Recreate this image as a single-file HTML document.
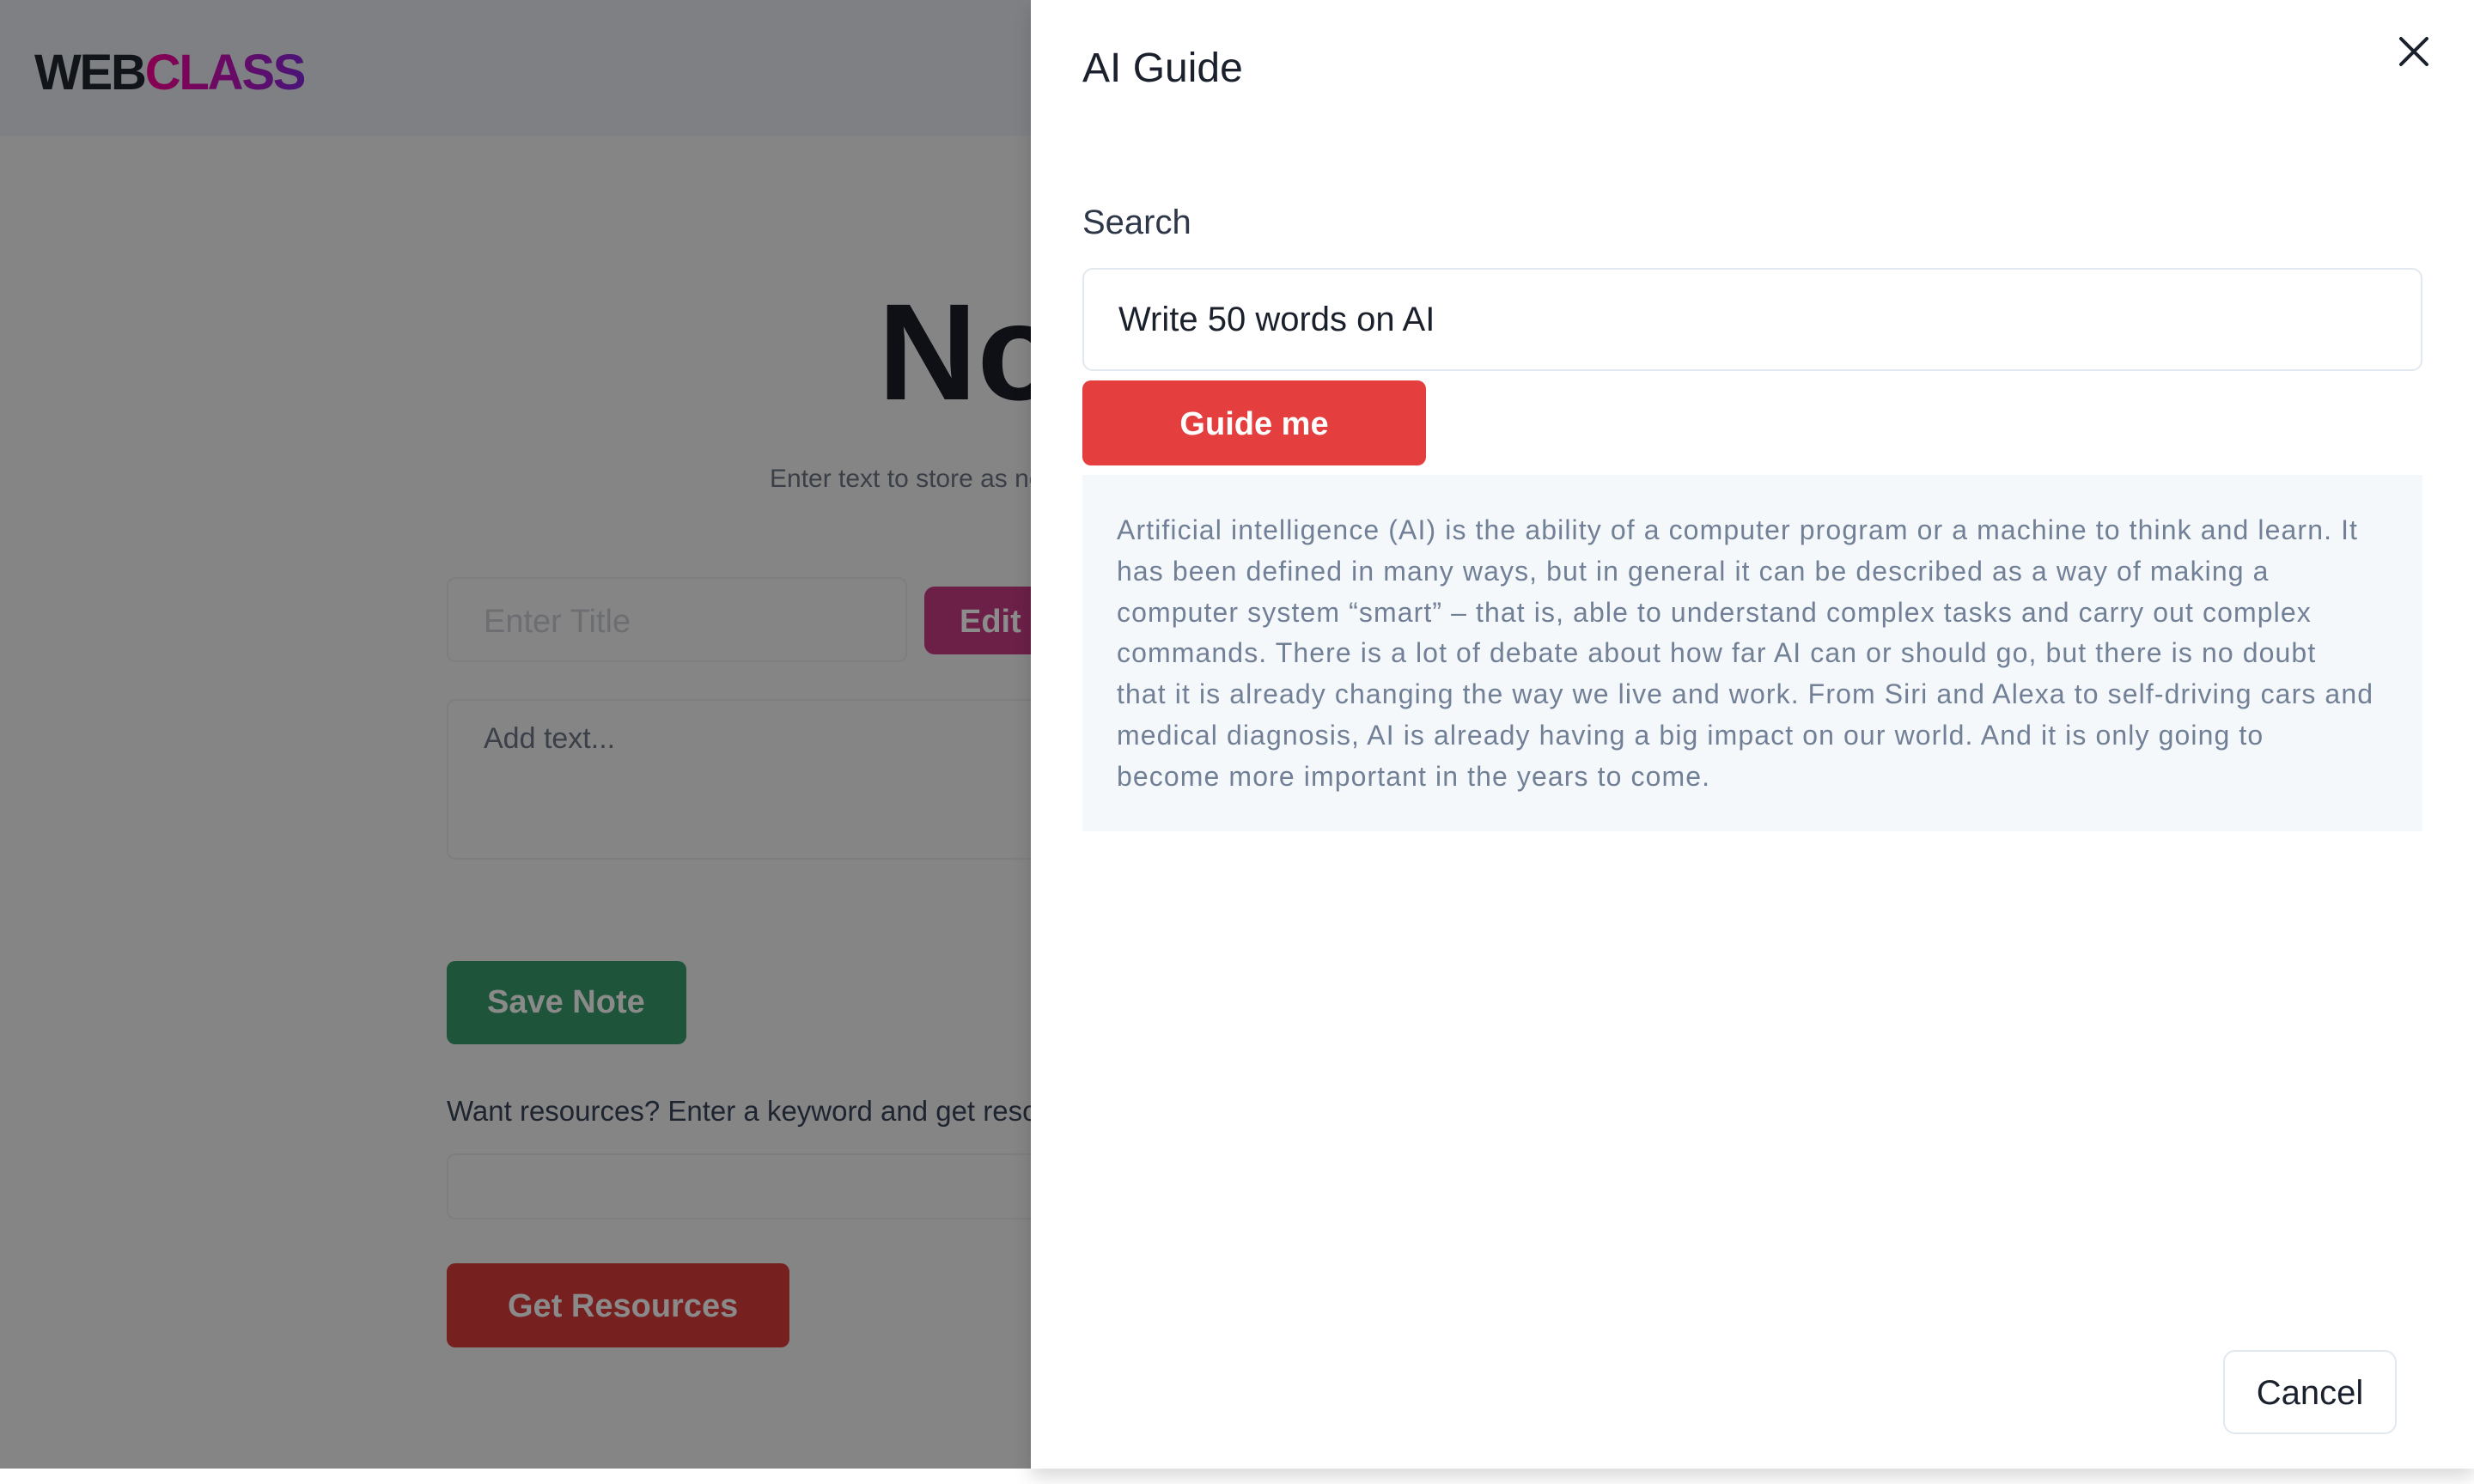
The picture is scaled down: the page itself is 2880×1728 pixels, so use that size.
<!DOCTYPE html>
<html><head><meta charset="utf-8"><style>
*{box-sizing:border-box;margin:0;padding:0}
body{width:2880px;height:1728px;position:relative;overflow:hidden;background:#fff;font-family:"Liberation Sans",sans-serif}
.a{position:absolute}
.ov{left:0;top:0;width:1200px;height:1710px;background:#858585}
.hdr{left:0;top:0;width:1200px;height:158px;background:#7f8084}
.logo{left:40px;top:50px;font-size:58px;font-weight:bold;letter-spacing:-2.2px;color:#111418;line-height:70px}
.logo span{background:linear-gradient(90deg,#8a0050,#4a1478);-webkit-background-clip:text;color:transparent}
.panel{left:1200px;top:0;width:1680px;height:1710px;background:#fff;box-shadow:0 10px 20px rgba(0,0,0,.15)}
.btxt{white-space:nowrap}
</style></head><body>
<div class="a ov"></div>
<div class="a hdr"></div>
<div class="a logo">WEB<span>CLASS</span></div>
<div class="a btxt" style="left:1022px;top:330px;font-size:160px;font-weight:bold;color:#0e1015;line-height:160px">Notes</div>
<div class="a btxt" style="left:896px;top:541px;font-size:30px;color:#3a3f48">Enter text to store as notes</div>
<div class="a" style="left:520px;top:672px;width:536px;height:99px;border:2px solid #7e7e7e;border-radius:10px"></div>
<div class="a btxt" style="left:563px;top:703px;font-size:38px;color:#6c6e72">Enter Title</div>
<div class="a" style="left:1076px;top:683px;width:200px;height:79px;background:#6c2048;border-radius:12px"></div>
<div class="a btxt" style="left:1117px;top:703px;font-size:38px;color:#8c8c8c;font-weight:bold">Edit</div>
<div class="a" style="left:520px;top:814px;width:700px;height:187px;border:2px solid #7e7e7e;border-radius:10px"></div>
<div class="a btxt" style="left:563px;top:841px;font-size:34px;color:#3a3f48">Add text...</div>
<div class="a" style="left:520px;top:1119px;width:279px;height:97px;background:#1e553a;border-radius:10px"></div>
<div class="a btxt" style="left:567px;top:1146px;font-size:38px;color:#8a8a8a;font-weight:bold">Save Note</div>
<div class="a btxt" style="left:520px;top:1275px;font-size:33px;color:#1e2530">Want resources? Enter a keyword and get resources</div>
<div class="a" style="left:520px;top:1343px;width:700px;height:77px;border:2px solid #7e7e7e;border-radius:10px"></div>
<div class="a" style="left:520px;top:1471px;width:399px;height:98px;background:#772020;border-radius:10px"></div>
<div class="a btxt" style="left:591px;top:1500px;font-size:38px;color:#8a8a8a;font-weight:bold">Get Resources</div>

<div class="a panel"></div>
<div class="a btxt" style="left:1260px;top:52px;font-size:48px;color:#1a202c;font-weight:500">AI Guide</div>
<svg class="a" style="left:2790px;top:40px" width="40" height="40" viewBox="0 0 40 40"><path d="M5 5L35 35M35 5L5 35" stroke="#1a202c" stroke-width="4" stroke-linecap="round"/></svg>
<div class="a btxt" style="left:1260px;top:237px;font-size:40px;color:#2d3748">Search</div>
<div class="a" style="left:1260px;top:312px;width:1560px;height:120px;border:2px solid #e2e8f0;border-radius:12px"></div>
<div class="a btxt" style="left:1302px;top:350px;font-size:40px;color:#1a202c">Write 50 words on AI</div>
<div class="a" style="left:1260px;top:443px;width:400px;height:99px;background:#e53e3e;border-radius:10px"></div>
<div class="a btxt" style="left:1260px;top:473px;width:400px;text-align:center;font-size:38px;color:#fff;font-weight:bold">Guide me</div>
<div class="a" style="left:1260px;top:553px;width:1560px;height:415px;background:#f5f8fb"></div>
<div class="a btxt" style="left:1300px;top:594px;font-size:32px;letter-spacing:1.1px;line-height:47.8px;color:#718096">Artificial intelligence (AI) is the ability of a computer program or a machine to think and learn. It<br>has been defined in many ways, but in general it can be described as a way of making a<br>computer system “smart” – that is, able to understand complex tasks and carry out complex<br>commands. There is a lot of debate about how far AI can or should go, but there is no doubt<br>that it is already changing the way we live and work. From Siri and Alexa to self-driving cars and<br>medical diagnosis, AI is already having a big impact on our world. And it is only going to<br>become more important in the years to come.</div>
<div class="a" style="left:2588px;top:1572px;width:202px;height:98px;border:2px solid #e2e8f0;border-radius:14px;background:#fff"></div>
<div class="a btxt" style="left:2588px;top:1600px;width:202px;text-align:center;font-size:40px;color:#1a202c">Cancel</div>
</body></html>
